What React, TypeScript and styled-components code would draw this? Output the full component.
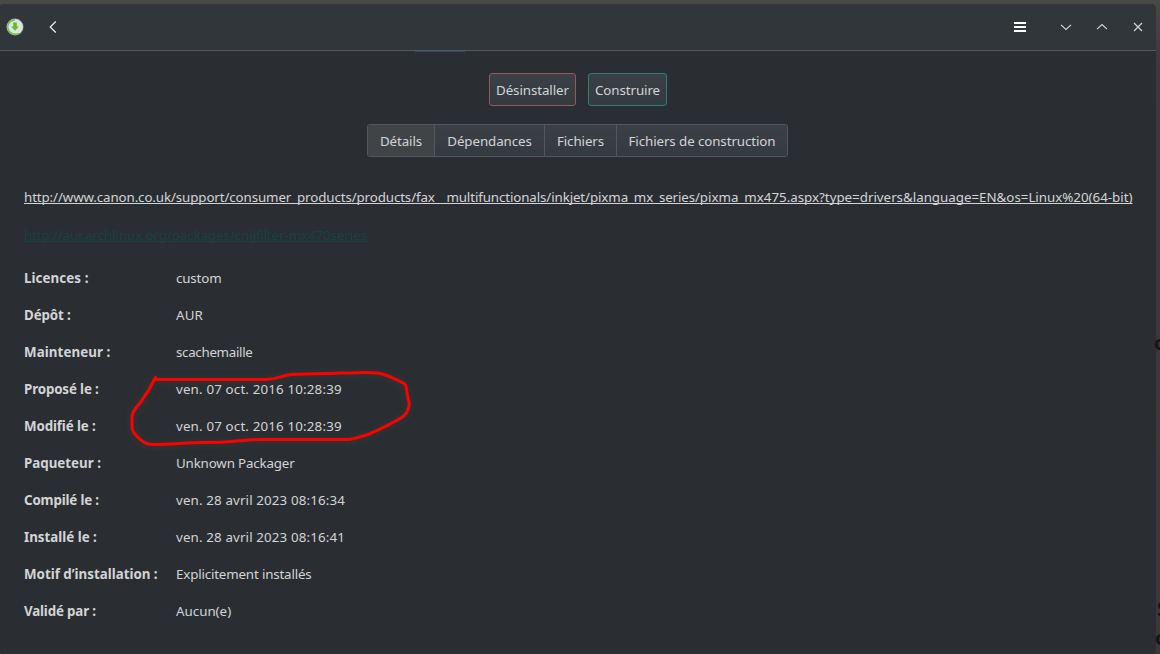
import React from "react";
import styled, { createGlobalStyle } from "styled-components";

const Global = createGlobalStyle`
  * { box-sizing: border-box; }
  html, body { margin: 0; height: 100%; overflow: hidden; }
  body { font: 13.333px/18px "Noto Sans", sans-serif; color: #d3d4d5; background: #3d3c3a; }
`;

const Desktop = styled.div`
  position: relative;
  width: 1160px;
  height: 654px;
  overflow: hidden;
  padding: 4px 4px 0 0;
  background: linear-gradient(#494949 0, #3b3a38 60px, #393835);
`;

const Window = styled.div`
  height: 650px;
  background: #2a2e33;
  border-radius: 4px 5px 4px 4px;
  overflow: hidden;
`;

const HeaderBar = styled.header`
  height: 47px;
  display: flex;
  align-items: center;
  padding: 0 12px 2px 6px;
  background: #31363b;
  border-top: 1px solid #35393d;
  border-bottom: 1px solid #56595b;
`;

const BackIcon = styled.svg`
  margin-left: 24px;
`;

const Controls = styled.div`
  margin-left: auto;
  display: flex;
  align-items: center;
  gap: 24px;
`;

const MenuIcon = styled.svg`
  margin-right: 10px;
`;

const Page = styled.main`
  display: flex;
  flex-direction: column;
`;

const Indicator = styled.div`
  width: 50px;
  height: 1px;
  margin-left: 415px;
  background: #2c4a6e;
`;

const Actions = styled.div`
  display: flex;
  gap: 12px;
  margin: 21px 0 0 489px;
`;

const ActionButton = styled.button<{ $tone: string; $width: number }>`
  width: ${(p) => p.$width}px;
  height: 33px;
  padding: 0;
  font: inherit;
  letter-spacing: -0.08px;
  color: inherit;
  border: 1px solid ${(p) => p.$tone};
  border-radius: 3px;
  background: linear-gradient(#3a4045, #343b40);
`;

const Tabs = styled.nav`
  display: flex;
  width: 421px;
  height: 33px;
  margin: 18px 0 0 367px;
  border: 1px solid #54585b;
  border-radius: 3px;
  overflow: hidden;
`;

const Tab = styled.button<{ $active?: boolean; $width: number }>`
  width: ${(p) => p.$width}px;
  padding: 0;
  font: inherit;
  letter-spacing: -0.09px;
  color: inherit;
  border: 0;
  border-right: 1px solid #54585b;
  background: ${(p) => (p.$active ? "#404447" : "linear-gradient(#3b4046, #343b40)")};
  &:last-child { border-right: 0; }
`;

const Link = styled.a<{ $faint?: boolean }>`
  display: block;
  align-self: flex-start;
  margin-left: 24px;
  margin-top: ${(p) => (p.$faint ? 20 : 31)}px;
  white-space: nowrap;
  letter-spacing: ${(p) => (p.$faint ? -0.09 : -0.11)}px;
  color: ${(p) => (p.$faint ? "#17423e" : "#d3d4d5")};
  text-decoration: underline;
  text-decoration-skip-ink: none;
  text-decoration-thickness: 1px;
  text-underline-offset: 1px;
`;

const LinkTail = styled.span`
  letter-spacing: -0.008px;
`;

const Details = styled.dl`
  display: grid;
  grid-template-columns: 152px 1fr;
  grid-auto-rows: 18px;
  row-gap: 19px;
  margin: 25px 0 0 24px;
`;

const Label = styled.dt<{ $tracking: number }>`
  font-weight: 700;
  white-space: nowrap;
  letter-spacing: ${(p) => p.$tracking}px;
`;

const Value = styled.dd<{ $tracking: number }>`
  margin: 0;
  letter-spacing: ${(p) => p.$tracking}px;
`;

const Marker = styled.svg`
  position: absolute;
  left: 119px;
  top: 360px;
  filter: drop-shadow(0 1px 3px rgba(80, 90, 40, 0.25));
`;

const BehindText = styled.div<{ $top: number; $left: number }>`
  position: absolute;
  left: ${(p) => p.$left}px;
  top: ${(p) => p.$top}px;
  width: ${(p) => 1160 - p.$left}px;
  height: 18px;
  overflow: hidden;
  color: #151515;
  font-size: 20px;
  font-weight: 700;
`;

const rows: [string, number, string, number][] = [
  ["Licences :", 0.08, "custom", -0.15],
  ["Dépôt :", -0.1, "AUR", 0.15],
  ["Mainteneur :", 0.08, "scachemaille", -0.3],
  ["Proposé le :", -0.14, "ven. 07 oct. 2016 10:28:39", 0.165],
  ["Modifié le :", -0.12, "ven. 07 oct. 2016 10:28:39", 0.165],
  ["Paqueteur :", 0, "Unknown Packager", -0.16],
  ["Compilé le :", -0.16, "ven. 28 avril 2023 08:16:34", 0.14],
  ["Installé le :", 0, "ven. 28 avril 2023 08:16:41", 0.14],
  ["Motif d’installation :", 0, "Explicitement installés", -0.165],
  ["Validé par :", -0.16, "Aucun(e)", 0],
];

const controlPaths = [
  "M1 3.8 6 8.5l5-4.7",
  "M1 8.2 6 3.5l5 4.7",
  "M2 2l8 8M10 2 2 10",
];

const AppIcon = () => (
  <svg width="18" height="18" viewBox="0 0 18 18">
    <circle cx="9" cy="9" r="8.5" fill="#a4afab" />
    <circle cx="9" cy="9" r="7.2" fill="#dfe3e3" stroke="#dfe9df" strokeWidth="1" />
    <path d="M9 1.8A7.2 7.2 0 1 0 12.6 15.2" fill="none" stroke="#62c12c" strokeWidth="1.3" />
    <path d="M7.2 4.5h3.6v4h2L9 12.7 5.2 8.5h2z" fill="#59c51b" />
  </svg>
);

export default function App() {
  return (
    <Desktop>
      <Global />
      <Window>
        <HeaderBar>
          <AppIcon />
          <BackIcon width="10" height="14" viewBox="0 0 10 14" fill="none" stroke="#eff0f1" strokeWidth="1.2">
            <path d="M7.8 1.5 2.2 7l5.6 5.5" />
          </BackIcon>
          <Controls>
            <MenuIcon width="12" height="10" viewBox="0 0 12 10" fill="#fff">
              <path d="M0 0h12v2H0zM0 4h12v2H0zM0 8h12v2H0z" />
            </MenuIcon>
            {controlPaths.map((d) => (
              <svg key={d} width="12" height="12" viewBox="0 0 12 12" fill="none" stroke="#d5d8da" strokeWidth="1.1">
                <path d={d} />
              </svg>
            ))}
          </Controls>
        </HeaderBar>
        <Page>
          <Indicator />
          <Actions>
            <ActionButton $tone="#99565c" $width={87}>Désinstaller</ActionButton>
            <ActionButton $tone="#2f7f73" $width={79}>Construire</ActionButton>
          </Actions>
          <Tabs>
            <Tab $active $width={67}>Détails</Tab>
            <Tab $width={110}>Dépendances</Tab>
            <Tab $width={72}>Fichiers</Tab>
            <Tab $width={170}>Fichiers de construction</Tab>
          </Tabs>
          <Link>
            http://www.canon.co.uk/support/consumer_products/products/fax__multifunctionals/inkjet/pixma_mx_series/
            <LinkTail>pixma_mx475.aspx?type=drivers&amp;language=EN&amp;os=Linux%20(64-bit)</LinkTail>
          </Link>
          <Link $faint>http://aur.archlinux.org/packages/cnijfilter-mx470series</Link>
          <Details>
            {rows.map(([label, labelTracking, value, valueTracking]) => (
              <React.Fragment key={label}>
                <Label $tracking={labelTracking}>{label}</Label>
                <Value $tracking={valueTracking}>{value}</Value>
              </React.Fragment>
            ))}
          </Details>
        </Page>
      </Window>
      <BehindText $top={334} $left={1154}>o</BehindText>
      <BehindText $top={600} $left={1157}>S</BehindText>
      <BehindText $top={629} $left={1155}>o</BehindText>
      <Marker width="300" height="100" viewBox="0 0 300 100" fill="none" stroke="#ff0000" strokeWidth="3" strokeLinejoin="round" strokeLinecap="round">
        <path d="M36.5 17.5C32 27 27 35 21 43C16 49 13 52 13 57V67C13 71 17 76 22 80C26 84 29 84.5 34 84.5C55 84 70 82.5 86 82.5C115 82.5 120 79.500 145 79.500H229C236 79 240 77 249 74.500C262 69 274 63 285 56C290 51 291 44 289.500 40C287.500 33 288 27 286 24C276 19 268 14 258 13C246 12 240 13 222 13C200 14 190 13.500 172 14.500C160 16 159 19.500 146 19.500H37" />
      </Marker>
    </Desktop>
  );
}
